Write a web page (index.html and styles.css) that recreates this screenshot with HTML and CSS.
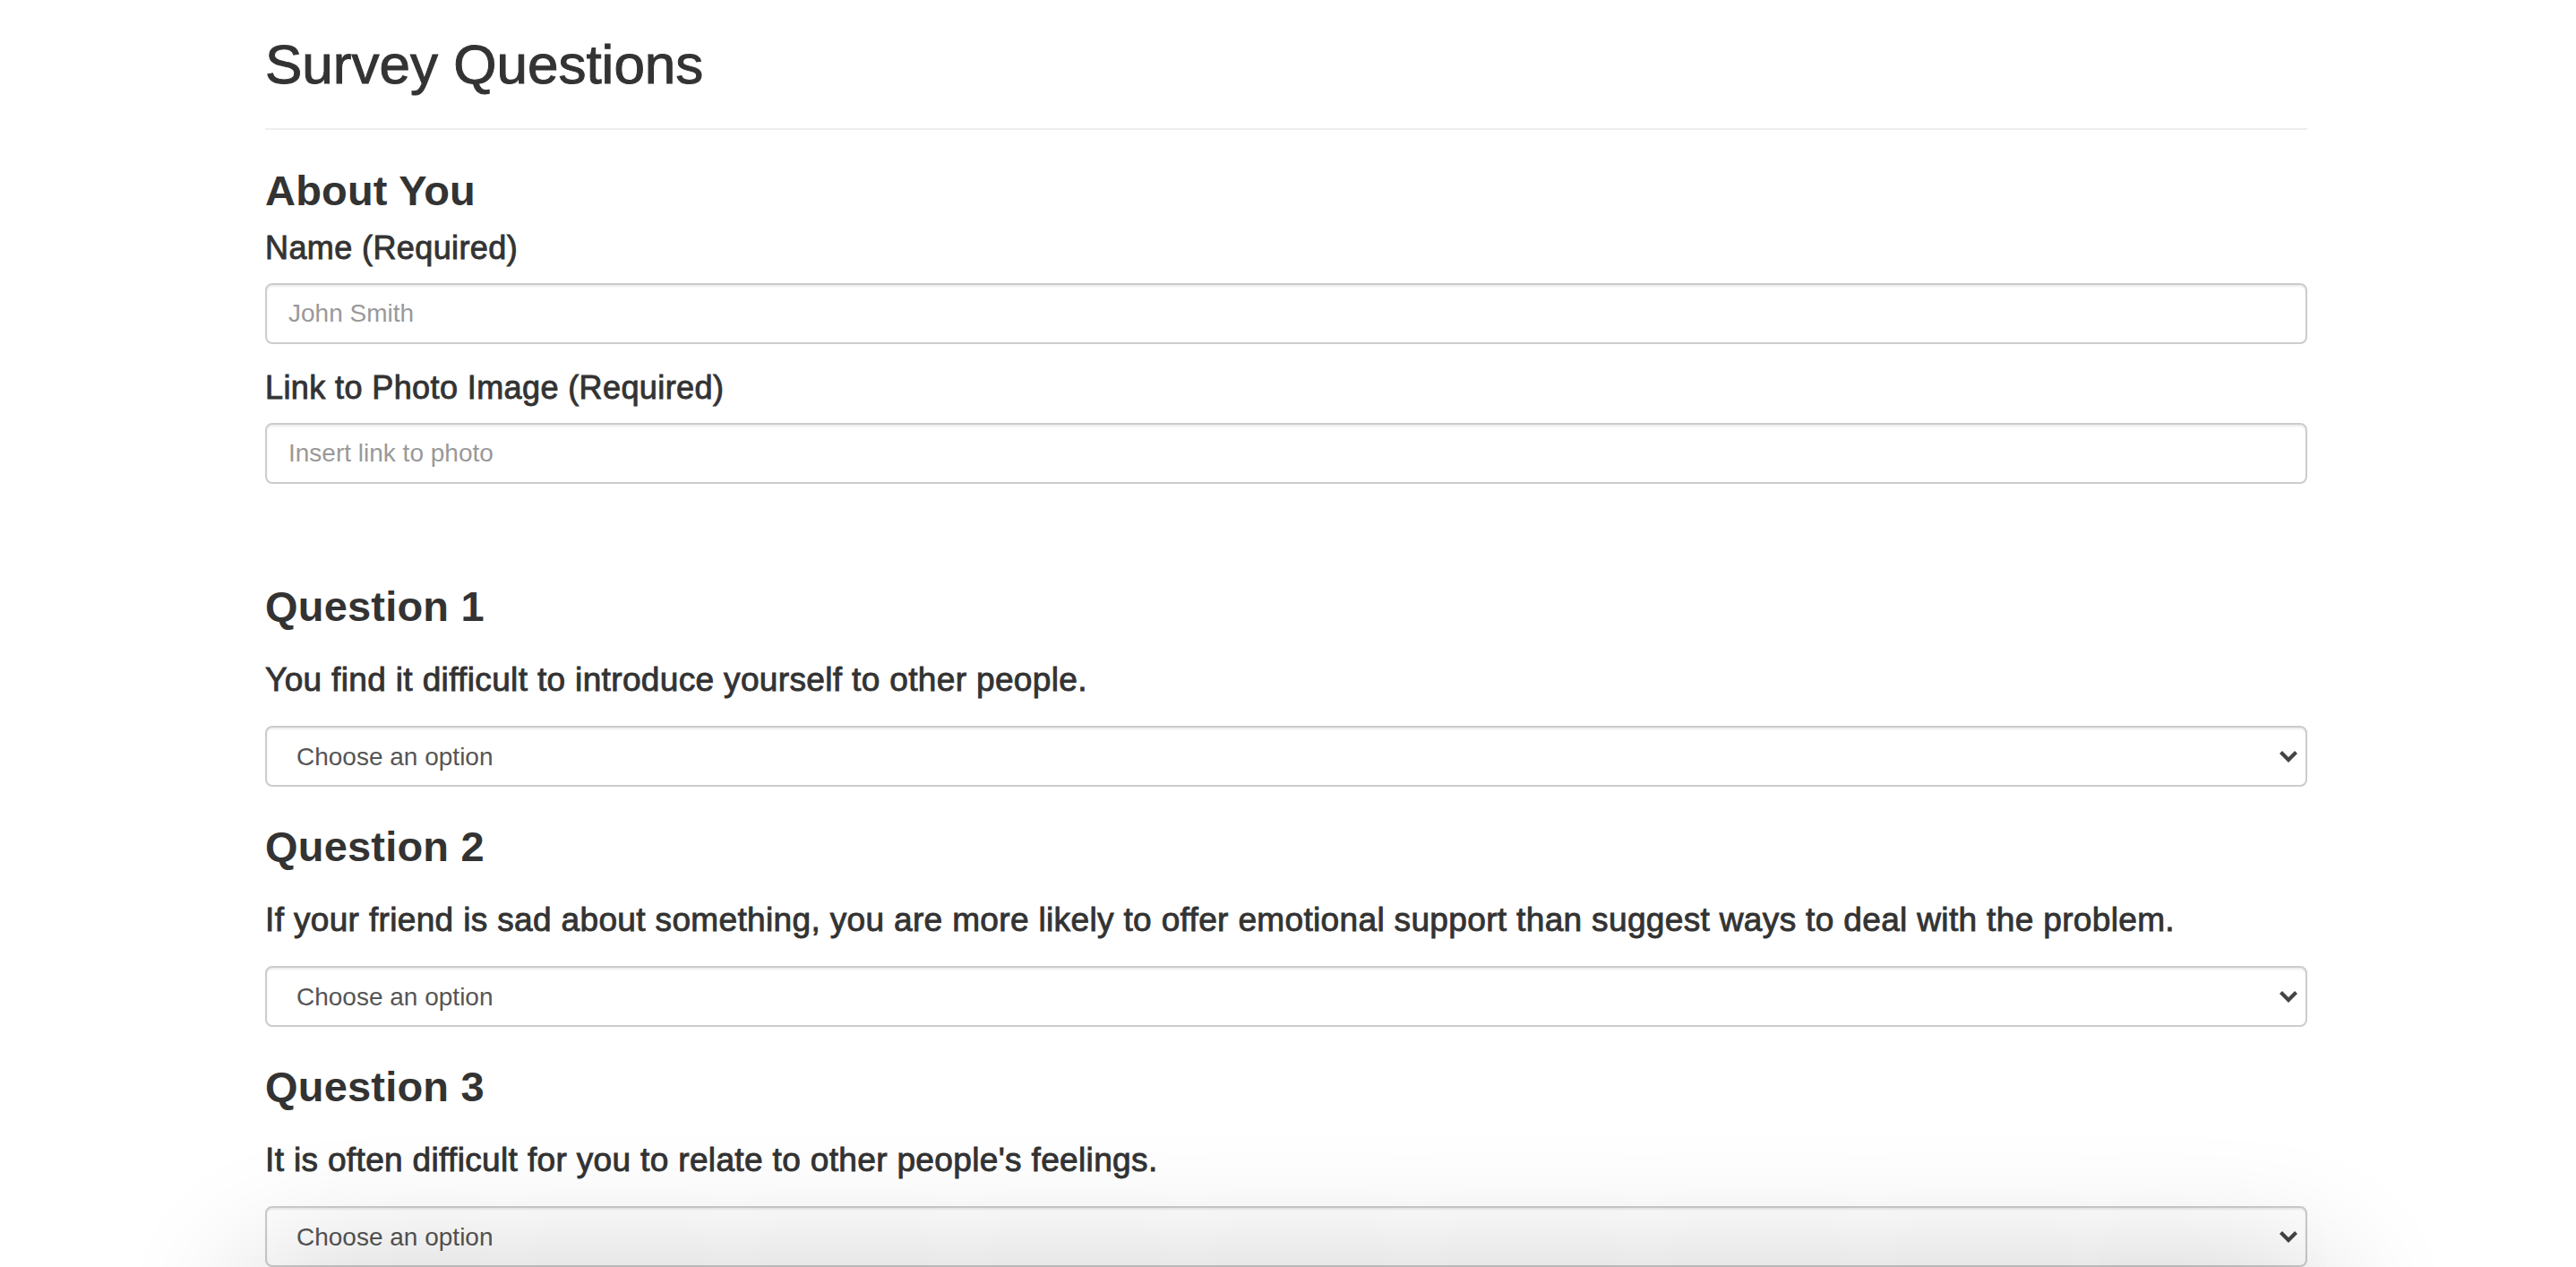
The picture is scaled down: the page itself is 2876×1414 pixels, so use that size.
FILE: index.html
```html
<!DOCTYPE html>
<html lang="en">
<head>
<meta charset="utf-8">
<title>Survey Questions</title>
<link rel="stylesheet" href="styles.css">
</head>
<body>
<div class="container">
  <header class="page-header">
    <h1 class="page-title">Survey Questions</h1>
  </header>

  <section class="about">
    <h3 class="section-title">About You</h3>
    <div class="form-group">
      <label class="field-label" for="name">Name (Required)</label>
      <input class="form-control" id="name" type="text" placeholder="John Smith">
    </div>
    <div class="form-group">
      <label class="field-label" for="photo">Link to Photo Image (Required)</label>
      <input class="form-control" id="photo" type="text" placeholder="Insert link to photo">
    </div>
  </section>

  <section class="questions">
    <div class="question">
      <h3 class="section-title">Question 1</h3>
      <h4 class="question-text">You find it difficult to introduce yourself to other people.</h4>
      <div class="select-wrap">
        <select class="form-control select-control">
          <option>Choose an option</option>
        </select>
        <svg class="chevron" width="22" height="14" viewBox="0 0 22 14"><path d="M2.5 2.5 L11 11 L19.5 2.5" fill="none" stroke="#444" stroke-width="4.2"/></svg>
      </div>
    </div>
    <div class="question">
      <h3 class="section-title">Question 2</h3>
      <h4 class="question-text">If your friend is sad about something, you are more likely to offer emotional support than suggest ways to deal with the problem.</h4>
      <div class="select-wrap">
        <select class="form-control select-control">
          <option>Choose an option</option>
        </select>
        <svg class="chevron" width="22" height="14" viewBox="0 0 22 14"><path d="M2.5 2.5 L11 11 L19.5 2.5" fill="none" stroke="#444" stroke-width="4.2"/></svg>
      </div>
    </div>
    <div class="question">
      <h3 class="section-title">Question 3</h3>
      <h4 class="question-text">It is often difficult for you to relate to other people's feelings.</h4>
      <div class="select-wrap">
        <select class="form-control select-control">
          <option>Choose an option</option>
        </select>
        <svg class="chevron" width="22" height="14" viewBox="0 0 22 14"><path d="M2.5 2.5 L11 11 L19.5 2.5" fill="none" stroke="#444" stroke-width="4.2"/></svg>
      </div>
    </div>
  </section>
</div>
<div class="bottom-shade"></div>
</body>
</html>
```

FILE: styles.css
```css
html, body {
  margin: 0;
  padding: 0;
  background: #fff;
}

body {
  font-family: "Liberation Sans", Arial, Helvetica, sans-serif;
  color: #333;
  font-size: 28px;
  line-height: 1.42857;
  overflow: hidden;
}

.container {
  width: 2280px;
  margin: 0 auto;
  padding-right: 4px;
}

.page-header {
  padding: 39px 0 38px;
  border-bottom: 2px solid #eee;
}

.page-title {
  margin: 0;
  font-size: 62px;
  line-height: 66px;
  font-weight: 400;
  -webkit-text-stroke: 1px #333;
}

.section-title {
  margin: 0;
  font-size: 47px;
  line-height: 50px;
  font-weight: 700;
  letter-spacing: 0.2px;
}

.about {
  display: flex;
  flex-direction: column;
  margin-top: 43px;
}

.about .section-title {
  margin-bottom: 19px;
}

.form-group {
  display: flex;
  flex-direction: column;
}

.form-group + .form-group {
  margin-top: 29px;
}

.field-label {
  font-size: 36px;
  line-height: 40px;
  font-weight: 400;
  letter-spacing: 0.4px;
  -webkit-text-stroke: 0.9px #333;
  margin-bottom: 19px;
}

.form-control {
  box-sizing: border-box;
  display: block;
  width: 100%;
  height: 68px;
  margin: 0;
  padding: 0 24px;
  font-family: "Liberation Sans", Arial, Helvetica, sans-serif;
  font-size: 28px;
  color: #555;
  background: #fff;
  border: 2px solid #ccc;
  border-radius: 8px;
  box-shadow: inset 0 2px 2px rgba(0, 0, 0, 0.075);
  outline: none;
}

.form-control::placeholder {
  color: #999;
}

.questions {
  display: flex;
  flex-direction: column;
  gap: 42px;
  margin-top: 112px;
}

.question {
  display: flex;
  flex-direction: column;
}

.question .section-title {
  margin-bottom: 37px;
}

.question-text {
  margin: 0 0 31px;
  font-size: 37px;
  line-height: 40px;
  font-weight: 400;
  letter-spacing: 0.35px;
  -webkit-text-stroke: 0.9px #333;
}

.select-wrap {
  position: relative;
}

.select-control {
  -webkit-appearance: none;
  appearance: none;
  padding-left: 33px;
  padding-right: 60px;
}

.chevron {
  position: absolute;
  right: 10px;
  top: 50%;
  transform: translateY(-50%);
  pointer-events: none;
}

.bottom-shade {
  position: fixed;
  left: 280px;
  right: 280px;
  top: 100%;
  height: 300px;
  background: #fff;
  border-radius: 40px;
  box-shadow: 0 0 150px rgba(0, 0, 0, 0.2);
}
```
